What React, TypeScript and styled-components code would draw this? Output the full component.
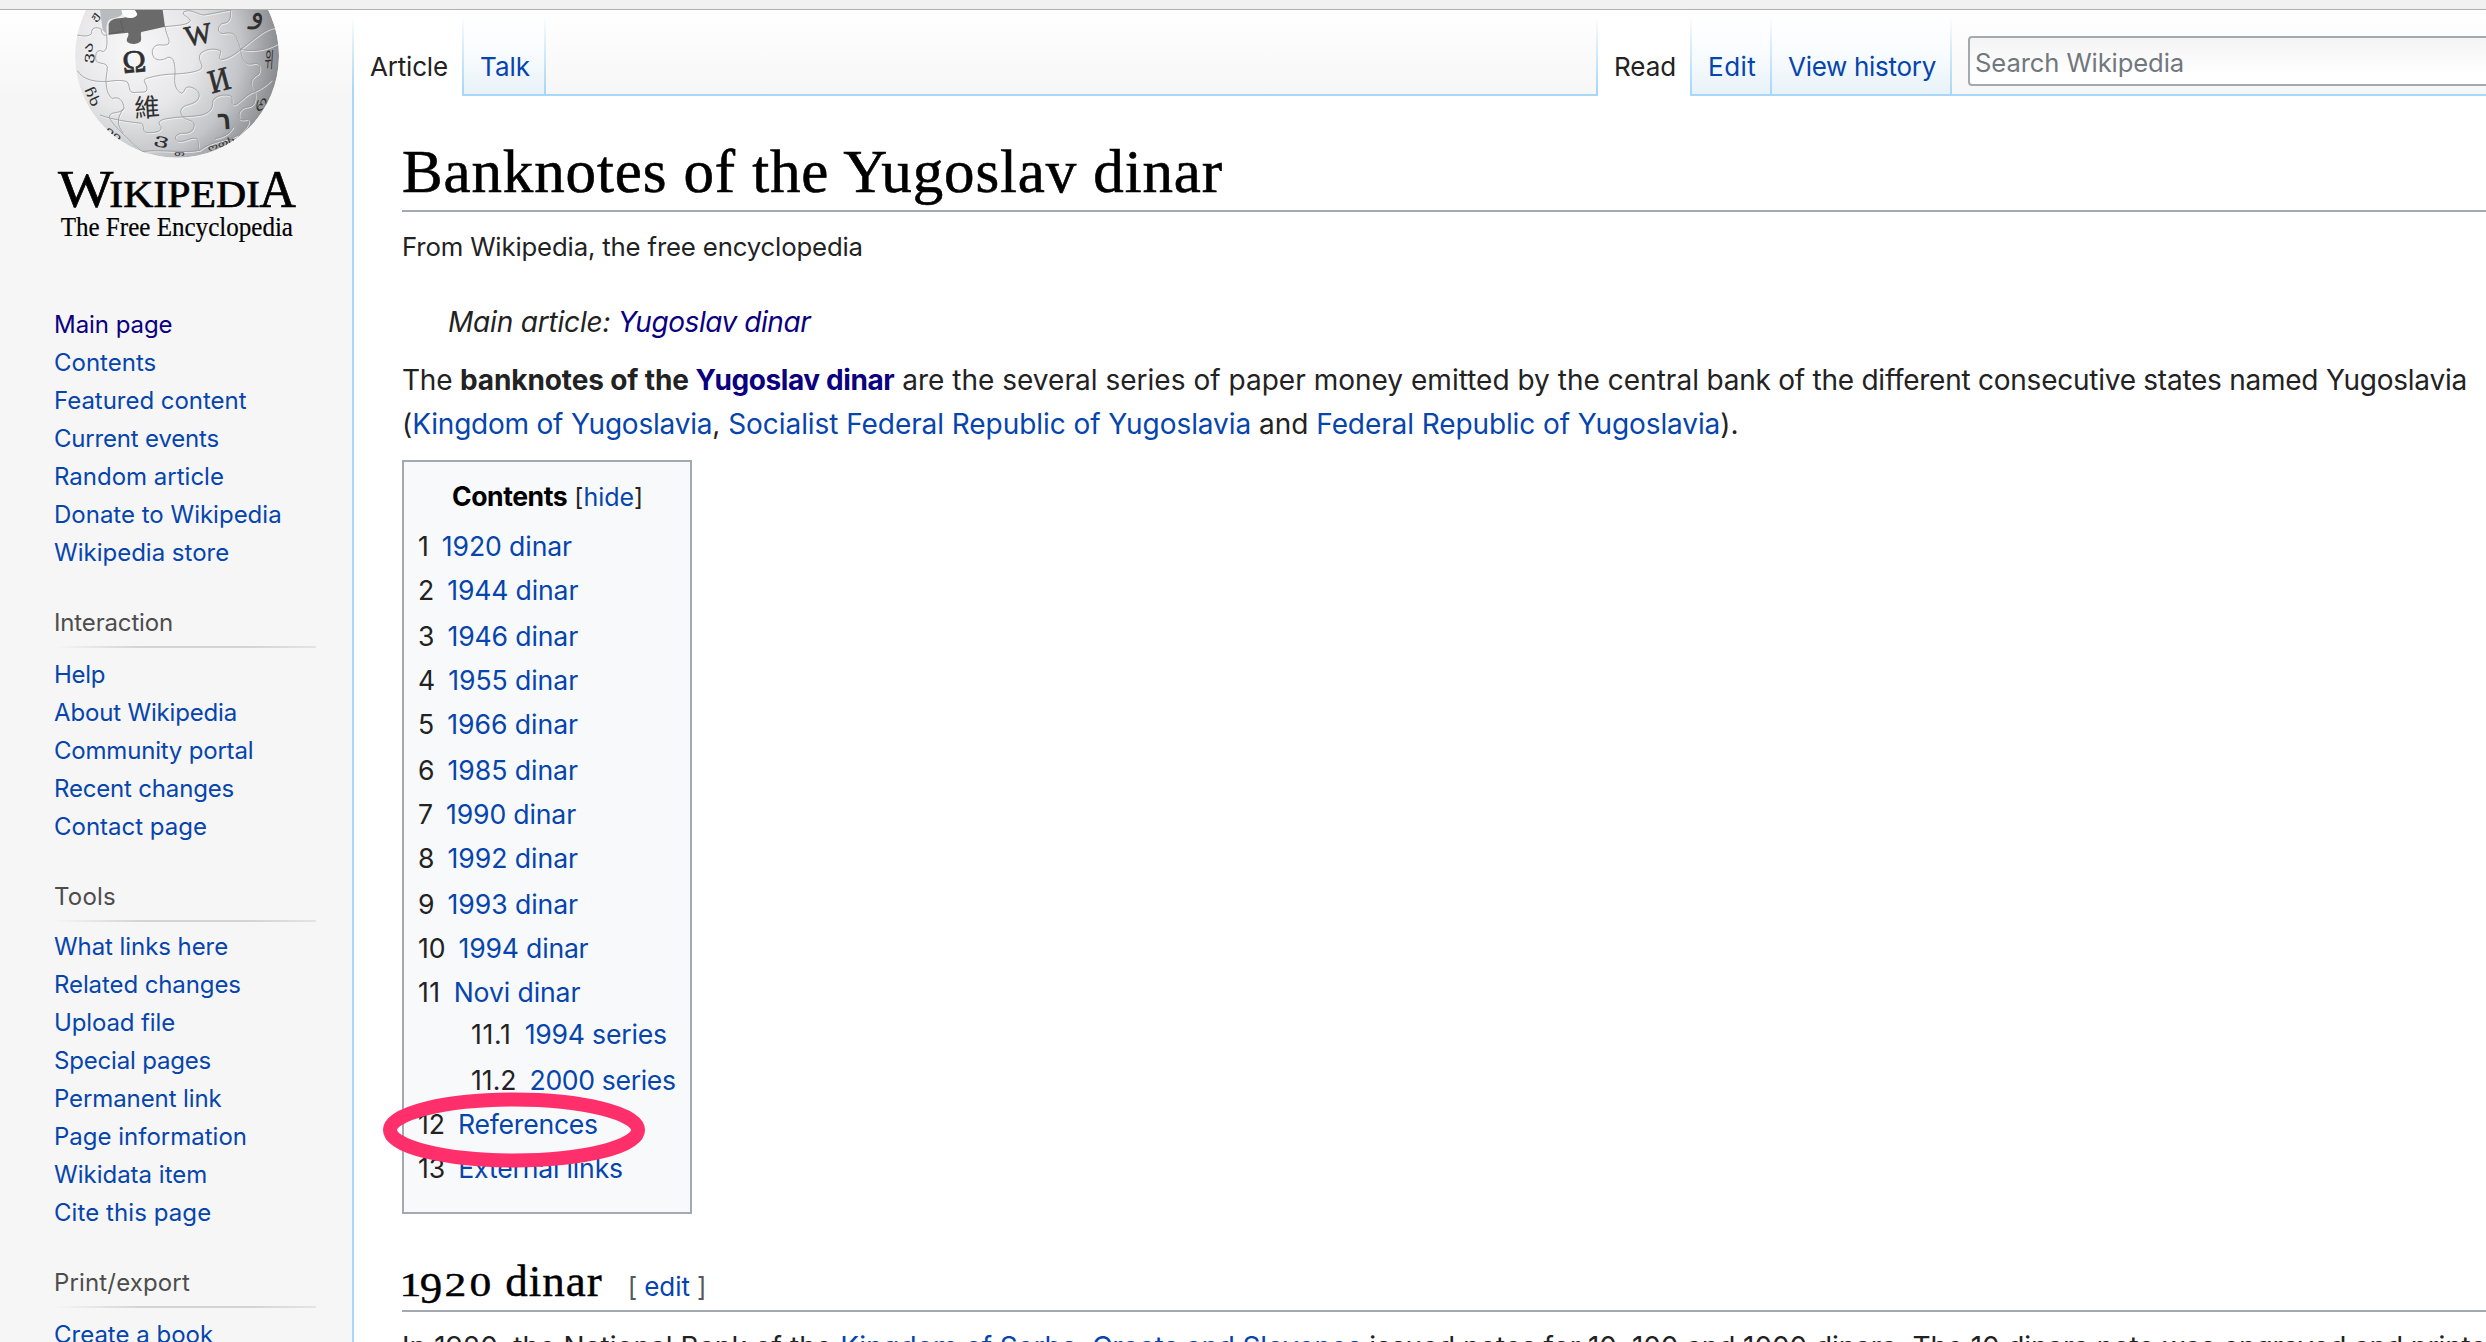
import React from "react";
import styled, { createGlobalStyle } from "styled-components";

const sans = `Inter, "Liberation Sans", Arial, sans-serif`;
const serif = `"Liberation Serif", Georgia, serif`;
const blue = "#0645ad";
const visited = "#0b0080";

const Global = createGlobalStyle`
  *, *::before, *::after { box-sizing: border-box; }
  body { margin: 0; background: #fff; overflow: hidden; font-family: ${sans}; color: #222; }
`;

const Page = styled.div`
  width: 2486px;
  height: 1342px;
  overflow: hidden;
  display: flex;
  flex-direction: column;
`;
const ChromeEdge = styled.div`
  height: 10px;
  flex: none;
  background: #f1f1f1;
  border-bottom: 1px solid #b0b0b0;
`;
const Body = styled.div`
  display: flex;
  flex: 1;
  min-height: 0;
  background: linear-gradient(#fff 0, #f6f6f6 90px, #f6f6f6 100%);
`;

/* Inline text run with its own tracking, colour and size */
const T = styled.span<{ $ls?: number; $c?: string; $b?: boolean; $size?: number }>`
  white-space: pre;
  letter-spacing: ${(p) => p.$ls ?? 0}px;
  ${(p) => p.$c && `color: ${p.$c};`}
  ${(p) => p.$b && "font-weight: 700;"}
  ${(p) => p.$size && `font-size: ${p.$size}px;`}
`;

/* Sidebar */
const Sidebar = styled.aside`
  width: 352px;
  flex: none;
  display: flex;
  flex-direction: column;
`;
const Logo = styled.svg`
  display: block;
  width: 352px;
  height: 250px;
  flex: none;
`;
const Portal = styled.nav<{ $first?: boolean; $gap?: number }>`
  padding-left: 54px;
  margin-top: ${(p) => (p.$first ? 46 : 32)}px;
  ul {
    list-style: none;
    margin: ${(p) => (p.$first ? 0 : (p.$gap ?? 8))}px 0 0;
    padding: 0;
  }
`;
const PortalTitle = styled.h3`
  margin: 0;
  width: 262px;
  height: 44px;
  font-size: 24px;
  font-weight: 400;
  line-height: 38px;
  color: #4d4d4d;
  background: linear-gradient(to right, rgba(200, 200, 200, 0) 0, #d4d4d4 33%, #d4d4d4 75%, rgba(200, 200, 200, 0.4) 100%)
    bottom / 100% 2px no-repeat;
`;
const PortalItem = styled.li`
  height: 38px;
  font-size: 24px;
  line-height: 38px;
  white-space: nowrap;
`;

/* Tabs */
const Main = styled.main`
  flex: 1;
  min-width: 0;
  display: flex;
  flex-direction: column;
`;
const TabBar = styled.div`
  display: flex;
  height: 86px;
  flex: none;
`;
const Edge = styled.div`
  width: 2px;
  flex: none;
  background: linear-gradient(to bottom, rgba(167, 215, 249, 0) 6px, #a7d7f9 82px);
`;
const Tab = styled.div<{ $w: number; $on?: boolean }>`
  width: ${(p) => p.$w}px;
  flex: none;
  padding: 40px 0 0 16px;
  font-size: 26px;
  line-height: 34px;
  white-space: nowrap;
  color: ${(p) => (p.$on ? "#222" : blue)};
  background: ${(p) => (p.$on ? "#fff" : "linear-gradient(#fff 0, #f9fcfe 50%, #e8f2f8 100%)")};
  ${(p) => !p.$on && "border-bottom: 2px solid #a7d7f9;"}
`;
const Filler = styled.div<{ $w?: number }>`
  ${(p) => (p.$w ? `width: ${p.$w}px; flex: none;` : "flex: 1;")}
  border-bottom: 2px solid #a7d7f9;
  overflow: hidden;
`;
const Search = styled.div`
  margin: 26px 0 0 16px;
  width: 700px;
  height: 50px;
  border: 2px solid #a2a9b1;
  border-radius: 4px;
  background: linear-gradient(#f4f4f4, #fff 80%);
  padding: 8px 0 0 5px;
  font-size: 25.6px;
  line-height: 34px;
  color: #72777d;
`;

/* Article */
const BodyRow = styled.div`
  display: flex;
  flex: 1;
  min-height: 0;
`;
const Rail = styled.div`
  width: 2px;
  flex: none;
  background: #a7d7f9;
`;
const Content = styled.div`
  flex: 1;
  min-width: 0;
  background: #fff;
  padding-left: 48px;
  overflow: hidden;
  white-space: nowrap;
`;
const Title = styled.h1`
  margin: 0;
  height: 116px;
  padding-top: 41px;
  border-bottom: 2px solid #a2a9b1;
  color: #000;
  font: 400 61px/70px ${serif};
  -webkit-text-stroke: 0.6px #000;
`;
const SiteSub = styled.div`
  margin-top: 18px;
  height: 34px;
  font-size: 25.76px;
  line-height: 34px;
`;
const Hatnote = styled.div`
  margin: 36px 0 0 46px;
  height: 44px;
  font-size: 28px;
  line-height: 44px;
  font-style: italic;
`;
const Para = styled.p<{ $mt: number }>`
  margin: ${(p) => p.$mt}px 0 0;
  font-size: 28px;
  line-height: 44px;
`;
const Toc = styled.div`
  position: relative;
  margin-top: 14px;
  width: 290px;
  height: 754px;
  background: #f8f9fa;
  border: 2px solid #a2a9b1;
  padding: 12px 0 0 14px;
  font-size: 26.6px;
`;
const TocTitle = styled.div`
  height: 44px;
  padding-left: 34px;
  line-height: 44px;
  color: #000;
`;
const TocRow = styled.div<{ $h: number; $sub?: boolean }>`
  display: flex;
  align-items: flex-end;
  gap: 13px;
  height: ${(p) => p.$h}px;
  line-height: 40px;
  padding-left: ${(p) => (p.$sub ? 53 : 0)}px;
`;
const Mark = styled.svg`
  position: absolute;
  left: -24px;
  top: 627px;
  width: 268px;
  height: 82px;
  overflow: visible;
`;
const H2 = styled.h2`
  margin: 34px 0 0;
  height: 64px;
  padding-top: 1px;
  border-bottom: 2px solid #a2a9b1;
  color: #000;
  font: 400 45px/64px ${serif};
  display: flex;
  align-items: baseline;
  -webkit-text-stroke: 0.4px #000;
`;
/* Old-style figure: x-height digits, with the nine dropping below the baseline */
const OldDigit = styled.span<{ $w: number; $drop?: boolean }>`
  width: ${(p) => p.$w}px;
  text-align: center;
  ${(p) => (p.$drop ? "transform: translateY(7px);" : "font-size: 33.5px; transform: scaleX(1.3);")}
`;
const EditLink = styled.span`
  margin-left: 25px;
  font: 400 26px/40px ${sans};
  color: #54595d;
  display: flex;
  gap: 7px;
  -webkit-text-stroke: 0;
`;

type Label = [text: string, tracking?: number, color?: string];
type PortalData = { title?: Label; gap?: number; items: Label[] };

const portals: PortalData[] = [
  {
    items: [
      ["Main page", -0.05, visited],
      ["Contents"],
      ["Featured content", -0.03],
      ["Current events", -0.18],
      ["Random article"],
      ["Donate to Wikipedia"],
      ["Wikipedia store"],
    ],
  },
  {
    title: ["Interaction", -0.15],
    items: [
      ["Help", -0.3],
      ["About Wikipedia", -0.17],
      ["Community portal", -0.2],
      ["Recent changes", -0.18],
      ["Contact page"],
    ],
  },
  {
    title: ["Tools", 0.2],
    gap: 6,
    items: [
      ["What links here", -0.07],
      ["Related changes", -0.1],
      ["Upload file", -0.12],
      ["Special pages", -0.18],
      ["Permanent link", -0.1],
      ["Page information"],
      ["Wikidata item"],
      ["Cite this page", 0.08],
    ],
  },
  { title: ["Print/export", 0.15], items: [["Create a book"]] },
];

type TocEntry = { n: string; t: string; h: number; ls?: number; nls?: number; sub?: boolean };
const toc: TocEntry[] = [
  { n: "1", t: "1920 dinar", h: 48, ls: -0.1 },
  { n: "2", t: "1944 dinar", h: 44, ls: -0.15 },
  { n: "3", t: "1946 dinar", h: 46, ls: -0.12 },
  { n: "4", t: "1955 dinar", h: 44, ls: -0.06 },
  { n: "5", t: "1966 dinar", h: 44, ls: -0.03 },
  { n: "6", t: "1985 dinar", h: 46, ls: -0.03 },
  { n: "7", t: "1990 dinar", h: 44, ls: -0.15 },
  { n: "8", t: "1992 dinar", h: 44, ls: -0.03 },
  { n: "9", t: "1993 dinar", h: 46, ls: -0.05 },
  { n: "10", t: "1994 dinar", h: 44, ls: -0.2 },
  { n: "11", t: "Novi dinar", h: 44, nls: 0.5, ls: -0.1 },
  { n: "11.1", t: "1994 series", h: 42, nls: 0.7, ls: -0.2, sub: true },
  { n: "11.2", t: "2000 series", h: 46, ls: -0.35, sub: true },
  { n: "12", t: "References", h: 44, ls: -0.25 },
  { n: "13", t: "External links", h: 44, ls: -0.18 },
];

const seams = [
  "M495 80C500 110 512 120 505 132C492 142 465 122 457 152C455 188 490 182 503 172C522 168 526 195 525 222C522 250 525 270 545 280C560 272 550 256 575 262C602 272 602 290 590 303C570 318 545 312 542 335C545 365 580 355 583 375C580 398 565 400 545 400C525 402 520 418 535 424C560 426 570 410 590 416C600 430 592 442 600 452",
  "M232 212C250 240 280 245 320 245C350 240 370 240 382 246C392 262 384 276 402 278C425 274 442 282 441 264C438 248 425 240 440 235C470 226 500 222 525 222C560 220 592 216 605 205C610 190 590 180 602 160C620 145 645 145 661 152C665 165 650 175 665 179C690 175 715 155 722 148C760 120 790 88 826 82",
  "M722 150C725 175 735 197 755 192C780 185 785 200 776 222C745 238 752 260 765 275C770 300 762 318 748 320C720 322 713 340 720 358C735 365 752 348 746 370C738 388 720 398 715 410",
  "M692 30C692 58 690 68 665 71C650 82 653 100 670 101C690 95 707 100 711 118C718 132 720 140 722 150",
  "M320 105C322 130 322 150 310 155C290 145 285 160 288 182C300 195 314 185 322 200C322 220 317 230 318 245C320 270 322 282 337 296C355 288 370 300 372 325C360 345 330 330 328 352C335 372 370 402 398 430C412 446 430 458 446 463",
  "M300 345C340 360 390 366 425 370C435 380 425 396 442 398C467 398 487 395 483 380C470 366 480 360 500 356C530 350 570 351 600 346C632 340 640 322 638 304C645 285 680 280 695 290C700 305 690 316 707 314C722 305 745 278 765 274C785 265 800 255 815 240",
  "M495 80C530 76 565 76 571 62C562 45 545 48 551 36C572 24 590 44 612 45C640 40 660 36 692 30",
  "M232 105C256 110 270 108 275 100C272 84 290 78 304 88C305 105 312 108 322 104",
  "M425 455C480 446 560 462 600 450C640 420 680 424 714 405M645 416C680 408 690 398 700 380",
  "M722 148C760 156 800 150 834 130M372 325C350 352 350 375 370 400",
];

const Globe = () => (
  <g>
    <defs>
      <radialGradient id="ball" gradientUnits="userSpaceOnUse" cx="400" cy="150" r="460">
        <stop offset="0" stopColor="#f8f8f9" />
        <stop offset="0.4" stopColor="#e7e7e9" />
        <stop offset="0.7" stopColor="#c4c5c8" />
        <stop offset="0.95" stopColor="#8b8c8f" />
        <stop offset="1" stopColor="#818285" />
      </radialGradient>
      <clipPath id="disc">
        <circle cx="531" cy="167" r="306" />
      </clipPath>
    </defs>
    <g clipPath="url(#disc)">
      <circle cx="531" cy="167" r="306" fill="url(#ball)" />
      <path d="M322 30L368 30C372 52 345 52 330 58C318 66 318 90 322 104L308 90L300 30Z" fill="#b9bbbe" />
      <path
        d="M326 104L326 72C335 50 365 58 376 52C395 56 410 52 412 42L402 30L488 30L495 80L424 96C420 105 426 112 422 124C412 134 392 134 382 126C376 114 390 108 384 98Z"
        fill="#6a6a6b"
      />
      <path d="M364 30L404 30C414 40 412 50 398 53C380 55 366 48 364 30Z" fill="#fff" />
      <path d="M362 60L370 94L326 102" fill="none" stroke="#555" strokeWidth="2" />
      <g fill="none" stroke="#fff" strokeWidth="3" strokeOpacity="0.65" transform="translate(2 3)">
        {seams.map((d) => (
          <path key={d} d={d} />
        ))}
      </g>
      <g fill="none" stroke="#96979a" strokeWidth="2.4">
        {seams.map((d) => (
          <path key={d} d={d} />
        ))}
      </g>
      <g fill="#2f2f30" textAnchor="middle" fontFamily={`"Liberation Serif", "DejaVu Serif", serif`}>
        <text x="0" y="0" fontSize="96" stroke="#2f2f30" strokeWidth="2" transform="translate(405 217) rotate(-5)">Ω</text>
        <text x="0" y="0" fontSize="86" stroke="#2f2f30" strokeWidth="2" transform="translate(600 132) rotate(-11)">W</text>
        <text x="0" y="0" fontSize="100" stroke="#2f2f30" strokeWidth="2" transform="translate(666 272) rotate(-15) scale(.88 1)">И</text>
        <text x="0" y="0" fontSize="76" fontFamily={`"Noto Sans CJK TC", sans-serif`} transform="translate(443 350) rotate(-4)">維</text>
        <text x="0" y="0" fontSize="86" fontWeight="700" fontFamily={`"DejaVu Sans", sans-serif`} transform="translate(674 388) rotate(-4) scale(.8 1)">ר</text>
        <text x="0" y="0" fontSize="64" fontFamily={`"Noto Sans CJK KR", sans-serif`} transform="translate(806 202) rotate(4) scale(.45 1)">위</text>
        <text x="0" y="0" fontSize="96" fontFamily={`"DejaVu Sans", sans-serif`} transform="translate(770 68) rotate(10) scale(.9 1)">و</text>
        <text x="0" y="0" fontSize="60" fontFamily={`"DejaVu Sans", sans-serif`} transform="translate(793 318) rotate(-60) scale(1 .5)">რ</text>
        <text x="0" y="0" fontSize="62" fontFamily={`"DejaVu Sans", sans-serif`} transform="translate(276 160) rotate(-84) scale(1 .6)">ვა</text>
        <text x="0" y="0" fontSize="56" fontFamily={`"DejaVu Sans", sans-serif`} transform="translate(265 296) rotate(66) scale(1 .7)">ჩხ</text>
        <text x="0" y="0" fontSize="46" fontFamily={`"DejaVu Sans", sans-serif`} transform="translate(292 56) rotate(-50) scale(1 .7)">ჟ</text>
        <text x="0" y="0" fontSize="46" fontFamily={`"DejaVu Sans", sans-serif`} transform="translate(336 408) rotate(38) scale(1.1 .6)">იი</text>
        <text x="0" y="0" fontSize="60" fontFamily={`"DejaVu Sans", sans-serif`} transform="translate(482 432) rotate(12) scale(1.5 .7)">ვ</text>
        <text x="0" y="0" fontSize="40" fontFamily={`"DejaVu Sans", sans-serif`} transform="translate(666 440) rotate(-20) scale(1 .6)">ოთხ</text>
        <text x="0" y="0" fontSize="34" fontFamily={`"DejaVu Sans", sans-serif`} transform="translate(538 468) scale(1.2 .6)">თ</text>
      </g>
    </g>
  </g>
);

export default function App() {
  return (
    <Page>
      <Global />
      <ChromeEdge />
      <Body>
        <Sidebar>
          <Logo viewBox="0 30 1056 750">
            <Globe />
            <g fill="#000" fontFamily={serif}>
              <text y="621" fontSize="157" stroke="#000" strokeWidth="2">
                <tspan x="174" textLength="166" lengthAdjust="spacingAndGlyphs">W</tspan>
                <tspan x="328" fontSize="112" textLength="452" lengthAdjust="spacingAndGlyphs">IKIPEDI</tspan>
                <tspan x="778" textLength="110" lengthAdjust="spacingAndGlyphs">A</tspan>
              </text>
              <text x="182" y="709" fontSize="79" stroke="#000" strokeWidth="0.6" textLength="697" lengthAdjust="spacingAndGlyphs">The Free Encyclopedia</text>
            </g>
          </Logo>
          {portals.map((p, i) => (
            <Portal key={i} $first={i === 0} $gap={p.gap}>
              {p.title && (
                <PortalTitle>
                  <T $ls={p.title[1]}>{p.title[0]}</T>
                </PortalTitle>
              )}
              <ul>
                {p.items.map(([text, ls, color]) => (
                  <PortalItem key={text}>
                    <T $ls={ls} $c={color ?? blue}>{text}</T>
                  </PortalItem>
                ))}
              </ul>
            </Portal>
          ))}
        </Sidebar>
        <Main>
          <TabBar>
            <Edge />
            <Tab $w={108} $on><T $ls={-0.2}>Article</T></Tab>
            <Edge />
            <Tab $w={80}><T>Talk</T></Tab>
            <Edge />
            <Filler $w={1050} />
            <Edge />
            <Tab $w={92} $on><T>Read</T></Tab>
            <Edge />
            <Tab $w={78}><T $ls={0.5}>Edit</T></Tab>
            <Edge />
            <Tab $w={178}><T $ls={-0.3}>View history</T></Tab>
            <Edge />
            <Filler>
              <Search><T $ls={-0.1}>Search Wikipedia</T></Search>
            </Filler>
          </TabBar>
          <BodyRow>
            <Rail />
            <Content>
              <Title><T $ls={0.87}>Banknotes of the Yugoslav dinar</T></Title>
              <SiteSub><T $ls={-0.16}>From Wikipedia, the free encyclopedia</T></SiteSub>
              <Hatnote>
                <T $ls={-0.2}>Main article: </T>
                <T $c={visited} $ls={-0.45}>Yugoslav dinar</T>
              </Hatnote>
              <Para $mt={14}>
                <T $ls={-0.2}>The </T>
                <T $b $ls={-0.12}>banknotes of the </T>
                <T $b $c={visited} $ls={-0.4}>Yugoslav dinar</T>
                <T $ls={0.02}> are the several series of paper money emitted by the central</T>
                <T $ls={-0.25}> bank of the different consecutive states named Yugoslavia</T>
                <br />
                <T>(</T>
                <T $c={blue} $ls={-0.22}>Kingdom of Yugoslavia</T>
                <T>, </T>
                <T $c={blue} $ls={-0.065}>Socialist Federal Republic of Yugoslavia</T>
                <T> and </T>
                <T $c={blue} $ls={-0.1}>Federal Republic of Yugoslavia</T>
                <T>).</T>
              </Para>
              <Toc>
                <TocTitle>
                  <T $b $ls={-0.45}>Contents</T>
                  <T $size={25} $c="#222"> [</T>
                  <T $size={25} $c={blue}>hide</T>
                  <T $size={25} $c="#222">]</T>
                </TocTitle>
                {toc.map((e) => (
                  <TocRow key={e.n} $h={e.h} $sub={e.sub}>
                    <T $ls={e.nls}>{e.n}</T>
                    <T $ls={e.ls} $c={blue}>{e.t}</T>
                  </TocRow>
                ))}
                <Mark viewBox="0 0 268 82">
                  <ellipse cx="134" cy="41" rx="124" ry="30.5" fill="none" stroke="#ff2f6c" strokeWidth="14" />
                </Mark>
              </Toc>
              <H2>
                <OldDigit $w={17}>1</OldDigit>
                <OldDigit $w={24} $drop>9</OldDigit>
                <OldDigit $w={25}>2</OldDigit>
                <OldDigit $w={25}>0</OldDigit>
                <T $ls={1}> dinar</T>
                <EditLink>
                  <span>[</span>
                  <T $c={blue}>edit</T>
                  <span>]</span>
                </EditLink>
              </H2>
              <Para $mt={13}>
                <T $ls={0.07}>In 1920, the National Bank of the </T>
                <T $c={blue} $ls={-0.14}>Kingdom of Serbs, Croats and Slovenes</T>
                <T $ls={-0.09}> issued notes for 10, 100 and 1000 dinara. </T>
                <T $ls={-0.15}>The 10 dinara note was engraved and printed</T>
              </Para>
            </Content>
          </BodyRow>
        </Main>
      </Body>
    </Page>
  );
}
